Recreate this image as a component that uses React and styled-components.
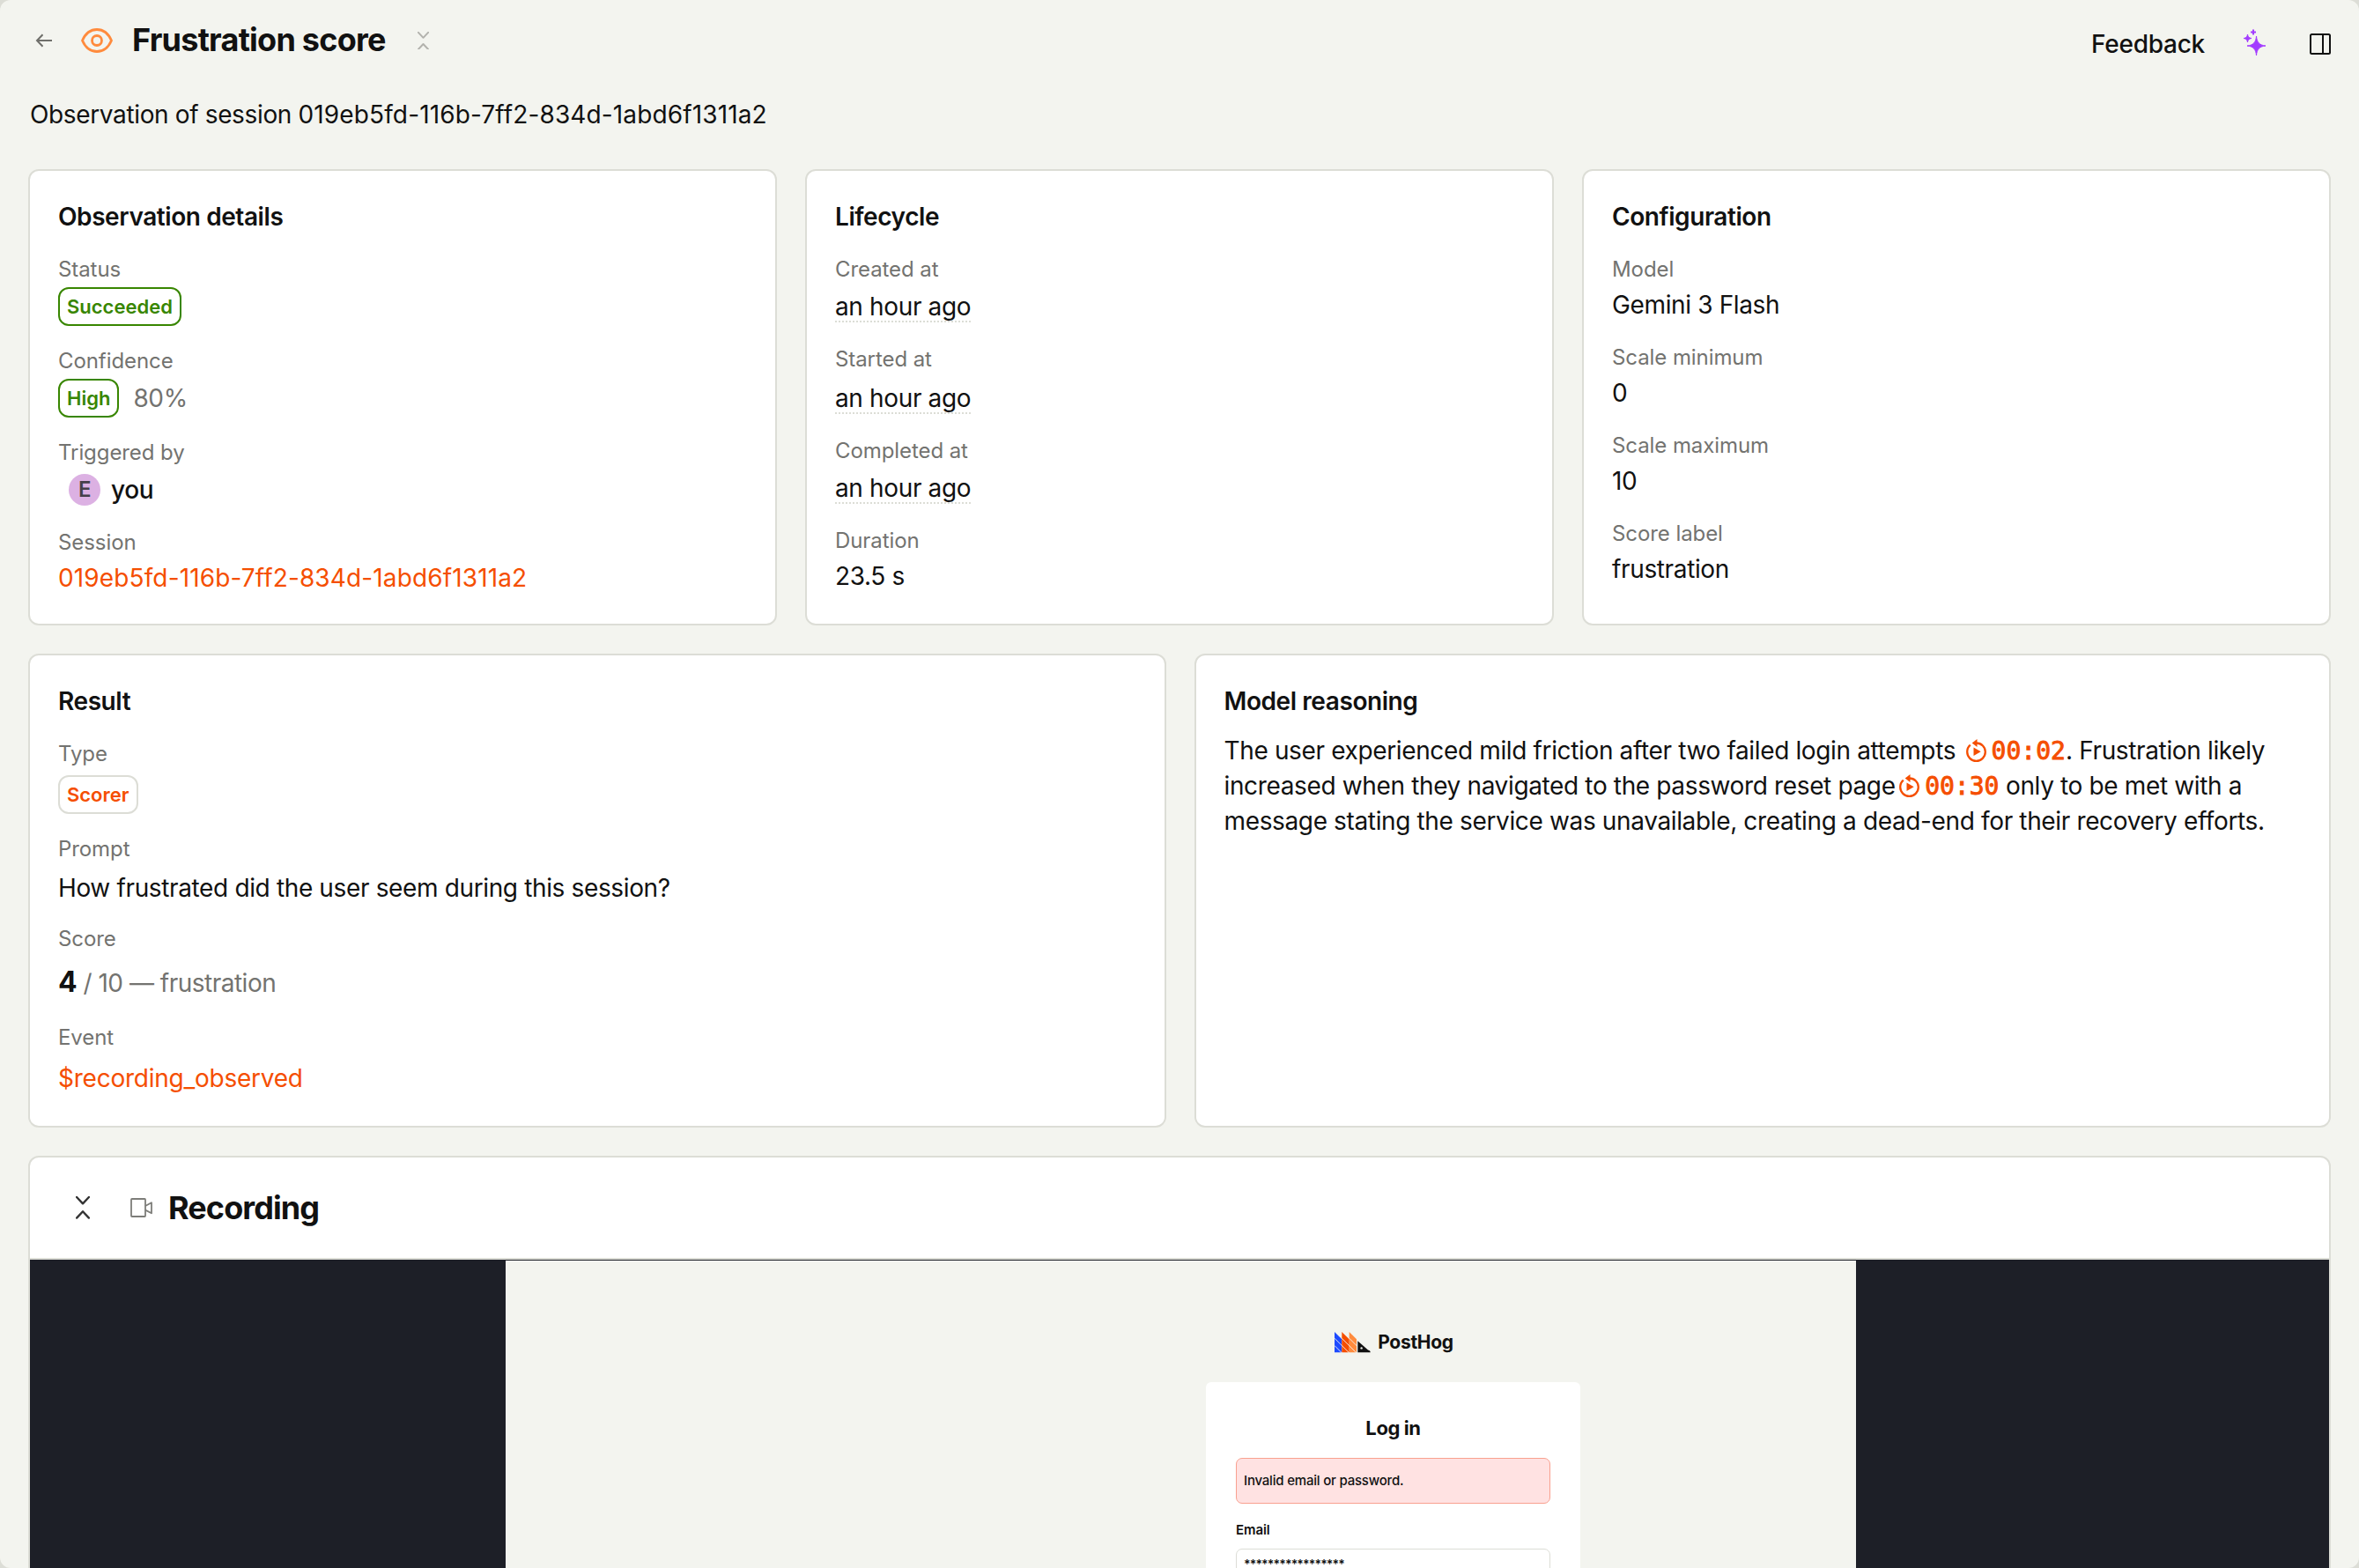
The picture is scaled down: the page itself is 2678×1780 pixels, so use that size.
import React from "react";
import styled, { createGlobalStyle, css } from "styled-components";

const SESSION_ID = "019eb5fd-116b-7ff2-834d-1abd6f1311a2";

const BackIcon = () => (
  <svg width="20" height="16" viewBox="0 0 20 16" fill="none" stroke="#6f6f6b" strokeWidth="2">
    <path d="M19 8H2M8.500 1.200L2 8l6.500 6.800" />
  </svg>
);

const EyeIcon = () => (
  <svg width="36" height="28" viewBox="0 0 36 28" fill="none" stroke="#ff8b3d" strokeWidth="2.8">
    <path
      d="M1.500 14C5 6 11 1.500 18 1.500S31 6 34.500 14C31 22 25 26.500 18 26.500S5 22 1.500 14Z"
      strokeLinejoin="round"
    />
    <circle cx="18" cy="14" r="5.500" />
  </svg>
);

const CollapseIcon = ({ size, color, weight }) => (
  <svg
    width={size}
    height={size * 1.6}
    viewBox="0 0 16 26"
    fill="none"
    stroke={color}
    strokeWidth={weight}
    strokeLinecap="round"
    strokeLinejoin="round"
  >
    <path d="M1 1l7 7.500L15 1M1 25l7-7.500L15 25" />
  </svg>
);

const SparkleIcon = () => (
  <svg width="26" height="30" viewBox="0 0 26 30" fill="#a33cff" stroke="#a33cff">
    <path d="M14.500 8c.5 7 3.500 10.400 10.500 11-7 .6-10 4-10.500 11-.5-7-3.500-10.400-10.500-11 7-.6 10-4 10.500-11Z" />
    <path d="M4.500 6c.4 3 1.500 4.100 4.500 4.500-3 .4-4.100 1.500-4.500 4.500C4.100 12 3 10.900 0 10.500 3 10.100 4.100 9 4.500 6Z" />
    <path d="M11 .5v6M8 3.500h6" strokeWidth="2" />
  </svg>
);

const PanelIcon = () => (
  <svg width="24" height="24" viewBox="0 0 24 24" fill="none" stroke="#111" strokeWidth="2">
    <rect x="1" y="1" width="22" height="22" rx="1.500" />
    <path d="M15 1v22" />
  </svg>
);

const VideoIcon = () => (
  <svg width="26" height="22" viewBox="0 0 26 22" fill="none" stroke="#7d7d79" strokeWidth="1.800">
    <rect x="1" y="1" width="16" height="20" rx="0.800" />
    <path d="M17 9l7-3.700v12L17 13.600" strokeLinejoin="round" />
  </svg>
);

const ReplayIcon = () => (
  <svg width="24" height="27" viewBox="0 0 24 27" fill="none">
    <path
      d="M11.500 4.500c6 0 10.300 4.600 10.300 10.100 0 5.700-4.600 10.300-10.300 10.300S1.200 20.300 1.200 14.600c0-3.200 1.300-6 3.600-7.900"
      stroke="#f54e00"
      strokeWidth="2.300"
    />
    <path d="M12.500 0v9L6.700 4.500 12.500 0Z" fill="#f54e00" />
    <path d="M8.500 9.500v9.600l8.200-4.800-8.200-4.800Z" fill="#f54e00" />
  </svg>
);

const HogMark = () => (
  <svg width="41" height="24" viewBox="0 0 41 24">
    <path d="M0 0l8.300 8.300V23.300H0Z" fill="#1d4aff" />
    <path d="M8.300 0l8.400 8.300v15H8.300Z" fill="#f54e00" />
    <path d="M16.700 0L25 8.300v15h-8.300Z" fill="#ff8b3d" />
    <path
      d="M0 15.500l8.500 8.500M0 7.200L17 24.200M8.300 7.200l17 17M16.700 7.200l9 9"
      stroke="#f3f4ef"
      strokeWidth="0.900"
    />
    <path d="M26.300 10.200L38 20.500c2 .4 2.700 1.200 2.700 2.800H26.300Z" fill="#111" />
    <circle cx="30.600" cy="18.400" r="1.200" fill="#f3f4ef" />
  </svg>
);

const Timestamp = ({ time, lead }) => (
  <Seek $lead={lead}>
    <ReplayIcon />
    <time>{time}</time>
  </Seek>
);

const Detail = ({ label, height, offset, children }) => (
  <Field>
    <Label>{label}</Label>
    <Value $height={height} $offset={offset}>
      {children}
    </Value>
  </Field>
);

const App = () => {
  return (
    <Page>
      <GlobalStyle />
      <Header>
        <BackIcon />
        <EyeSlot>
          <EyeIcon />
        </EyeSlot>
        <PageTitle>Frustration score</PageTitle>
        <ToggleSlot>
          <CollapseIcon size={13} color="#b2b2ad" weight={2.4} />
        </ToggleSlot>
        <Actions>
          <Feedback>Feedback</Feedback>
          <SparkleIcon />
          <PanelIcon />
        </Actions>
      </Header>
      <Description>
        Observation of session <Id>{SESSION_ID}</Id>
      </Description>

      <Content>
        <Grid $columns="repeat(3, 1fr)" $height={518}>
          <Card>
            <CardTitle>Observation details</CardTitle>
            <Detail label="Status" height={44}>
              <Tag $success>Succeeded</Tag>
            </Detail>
            <Detail label="Confidence" height={44}>
              <Tag $success>High</Tag>
              <Percent>80%</Percent>
            </Detail>
            <Detail label="Triggered by" height={42}>
              <Avatar>E</Avatar>
              <UserName>you</UserName>
            </Detail>
            <Detail label="Session">
              <Link>
                <Id>{SESSION_ID}</Id>
              </Link>
            </Detail>
          </Card>
          <Card>
            <CardTitle>Lifecycle</CardTitle>
            <Detail label="Created at" height={42} offset={6}>
              <RelativeTime>an hour ago</RelativeTime>
            </Detail>
            <Detail label="Started at" height={44} offset={8}>
              <RelativeTime>an hour ago</RelativeTime>
            </Detail>
            <Detail label="Completed at" height={42} offset={6}>
              <RelativeTime>an hour ago</RelativeTime>
            </Detail>
            <Detail label="Duration">23.5 s</Detail>
          </Card>
          <Card>
            <CardTitle>Configuration</CardTitle>
            <Detail label="Model">Gemini 3 Flash</Detail>
            <Detail label="Scale minimum">0</Detail>
            <Detail label="Scale maximum">10</Detail>
            <Detail label="Score label">frustration</Detail>
          </Card>
        </Grid>

        <Grid $columns="1291.5px 1fr" $height={538}>
          <Card>
            <CardTitle>Result</CardTitle>
            <Detail label="Type" height={48} offset={4}>
              <Tag>Scorer</Tag>
            </Detail>
            <Detail label="Prompt" height={42} offset={4}>
              How frustrated did the user seem during this session?
            </Detail>
            <Detail label="Score" height={52} offset={9}>
              <ScoreLine>
                <strong>4</strong> / 10 — frustration
              </ScoreLine>
            </Detail>
            <Detail label="Event" height={48} offset={6}>
              <Link>$recording_observed</Link>
            </Detail>
          </Card>
          <Card $gap={16}>
            <CardTitle>Model reasoning</CardTitle>
            <Reasoning>
              The user experienced mild friction after two failed login attempts{" "}
              <Timestamp time="00:02" lead={4} />. Frustration likely
              <br />
              increased when they navigated to the password reset page{" "}
              <Timestamp time="00:30" lead={-3} /> only to be met with a
              <br />
              message stating the service was unavailable, creating a dead-end
              for their recovery efforts.
            </Reasoning>
          </Card>
        </Grid>

        <Recording>
          <RecordingHeader>
            <CollapseIcon size={16} color="#333" weight={2.4} />
            <VideoSlot>
              <VideoIcon />
            </VideoSlot>
            <Heading>Recording</Heading>
          </RecordingHeader>
          <Player>
            <Viewport>
              <Login>
                <Brand>
                  <HogMark />
                  <span>PostHog</span>
                </Brand>
                <LoginCard>
                  <LoginTitle>Log in</LoginTitle>
                  <Alert>Invalid email or password.</Alert>
                  <InputLabel>Email</InputLabel>
                  <Input>*****************</Input>
                </LoginCard>
              </Login>
            </Viewport>
          </Player>
        </Recording>
      </Content>
    </Page>
  );
};

export default App;

const GlobalStyle = createGlobalStyle`
  * {
    box-sizing: border-box;
  }

  body {
    margin: 0;
    background: #dcddd6;
    overflow: hidden;
  }

  svg {
    display: block;
    flex-shrink: 0;
  }
`;

const Page = styled.div`
  width: 2678px;
  height: 1780px;
  overflow: hidden;
  border-radius: 12px;
  background: #f3f4ef;
  color: #111;
  font-family: Inter, "Liberation Sans", sans-serif;
  font-size: 28px;
  line-height: 40px;
  letter-spacing: -0.36px;
  white-space: nowrap;
`;

const Header = styled.header`
  display: flex;
  align-items: center;
  height: 92px;
  padding: 0 32px 0 40px;
`;

const EyeSlot = styled.div`
  margin: 0 22px 0 32px;
`;

const Heading = styled.h1`
  margin: 0;
  font-size: 36px;
  font-weight: 700;
  line-height: 44px;
  letter-spacing: -0.9px;
`;

const PageTitle = styled(Heading)`
  margin-top: -2px;
  letter-spacing: -0.75px;
`;

const ToggleSlot = styled.div`
  margin-left: 36px;
`;

const Actions = styled.div`
  display: flex;
  align-items: center;
  margin-left: auto;
  padding-top: 8px;

  svg:first-of-type {
    margin: -4px 49px 0 44px;
  }
`;

const Feedback = styled.span`
  font-weight: 500;
  letter-spacing: -0.25px;
`;

const Description = styled.p`
  margin: 18px 0 0 34px;
`;

const Id = styled.span`
  letter-spacing: 0.13px;
`;

const Content = styled.main`
  display: flex;
  flex-direction: column;
  gap: 32px;
  padding: 42px 32px 0;
`;

const Grid = styled.section`
  display: grid;
  grid-template-columns: ${({ $columns }) => $columns};
  gap: 32px;
  height: ${({ $height }) => $height}px;
`;

const Card = styled.div`
  display: flex;
  flex-direction: column;
  gap: ${({ $gap = 24 }) => $gap}px;
  padding: 32px;
  border: 2px solid #dcddd6;
  border-radius: 12px;
  background: white;
`;

const CardTitle = styled.h2`
  margin: 0;
  font-size: 28px;
  font-weight: 600;
  line-height: 40px;
  letter-spacing: -0.42px;
`;

const Field = styled.div`
  display: flex;
  flex-direction: column;
  gap: 4px;
`;

const Label = styled.div`
  color: #737370;
  font-size: 24px;
  line-height: 32px;
  letter-spacing: -0.08px;
`;

const Value = styled.div`
  display: flex;
  align-items: ${({ $offset }) => ($offset ? "flex-start" : "center")};
  height: ${({ $height = 40 }) => $height}px;
  padding-top: ${({ $offset = 0 }) => $offset}px;
`;

const Tag = styled.span`
  height: 44px;
  padding: 0 8px;
  border: 2px solid #dcddd6;
  border-radius: 12px;
  color: #f54e00;
  font-size: 22px;
  font-weight: 600;
  letter-spacing: 0;

  ${({ $success }) =>
    $success &&
    css`
      border-color: #388600;
      color: #388600;
    `}
`;

const Percent = styled.span`
  margin-left: 16px;
  color: #737370;
`;

const Avatar = styled.span`
  width: 36px;
  height: 36px;
  margin: 1px 12px 0;
  border-radius: 50%;
  background: #dcb1e3;
  color: #45404a;
  font-size: 24px;
  font-weight: 600;
  line-height: 36px;
  text-align: center;
`;

const UserName = styled.span`
  margin-top: 2px;
  font-weight: 500;
  letter-spacing: -0.4px;
`;

const Link = styled.span`
  color: #f54e00;
  letter-spacing: -0.24px;
`;

const RelativeTime = styled.span`
  height: 34px;
  line-height: 32px;
  background: repeating-linear-gradient(
      90deg,
      #dcddd6 0 2px,
      transparent 2px 4px
    )
    bottom / 100% 2px no-repeat;
`;

const ScoreLine = styled.div`
  color: #737370;
  letter-spacing: -0.5px;

  strong {
    color: #111;
    font-size: 32px;
    font-weight: 700;
  }
`;

const Reasoning = styled.p`
  margin: 0;
`;

const Seek = styled.span`
  display: inline-flex;
  align-items: center;
  gap: 5px;
  height: 28px;
  margin-left: ${({ $lead }) => $lead}px;
  color: #f54e00;
  vertical-align: -4px;

  time {
    font-family: "DejaVu Sans Mono", "Liberation Mono", monospace;
    letter-spacing: 0;
    -webkit-text-stroke: 0.9px #f54e00;
  }
`;

const Recording = styled.section`
  height: 600px;
  border: 2px solid #dcddd6;
  border-radius: 12px;
  background: white;
  overflow: hidden;
`;

const RecordingHeader = styled.div`
  display: flex;
  align-items: center;
  height: 116px;
  padding-left: 52px;
  border-bottom: 2px solid #dcddd6;
`;

const VideoSlot = styled.div`
  margin: 0 17px 0 46px;
`;

const Player = styled.div`
  display: flex;
  height: 484px;
  padding: 1px 0 0 540px;
  background: #1d1f27;
`;

const Viewport = styled.div`
  width: 1533px;
  padding: 80px 0 0 795px;
  background: #f3f4ef;
`;

const Login = styled.div`
  width: 425px;
`;

const Brand = styled.div`
  display: flex;
  align-items: center;
  justify-content: center;
  gap: 8px;
  height: 24px;
  padding: 1px 0 0 2px;
  font-size: 21px;
  font-weight: 700;
  letter-spacing: -0.3px;
`;

const LoginCard = styled.div`
  height: 400px;
  margin-top: 34px;
  padding: 36px 34px 0;
  border-radius: 6px;
  background: white;
`;

const LoginTitle = styled.h3`
  margin: 0;
  font-size: 22px;
  font-weight: 700;
  line-height: 32px;
  letter-spacing: -0.4px;
  text-align: center;
`;

const Alert = styled.div`
  height: 52px;
  margin-top: 18px;
  padding-left: 8px;
  border: 1.5px solid #f9a18f;
  border-radius: 7px;
  background: #ffe2e2;
  font-size: 15px;
  font-weight: 500;
  line-height: 50px;
  letter-spacing: -0.2px;
`;

const InputLabel = styled.div`
  margin-top: 18px;
  font-size: 15px;
  font-weight: 600;
  line-height: 24px;
  letter-spacing: -0.1px;
`;

const Input = styled.div`
  height: 54px;
  margin-top: 9px;
  padding: 7px 0 0 8px;
  border: 1px solid #dcddd6;
  border-radius: 7px;
  font-size: 14px;
  font-weight: 600;
  line-height: 20px;
  letter-spacing: -0.85px;
`;
